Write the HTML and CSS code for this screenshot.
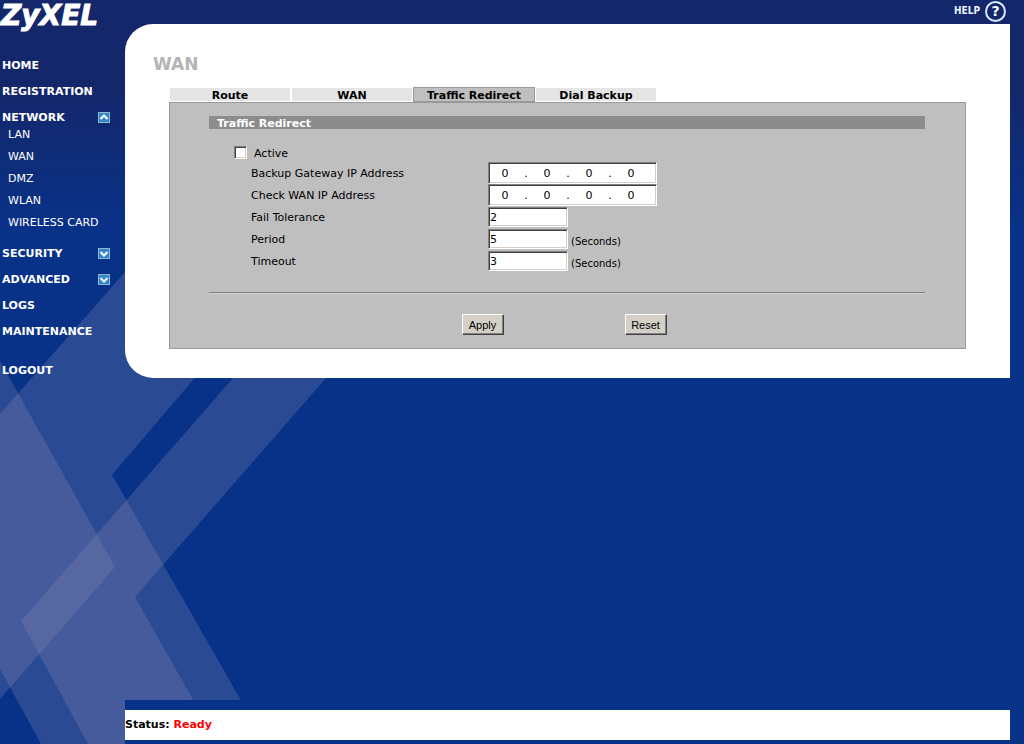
FILE: index.html
```html
<!DOCTYPE html>
<html lang="en">
<head>
    <meta charset="UTF-8">
    <meta name="viewport" content="width=device-width, initial-scale=1.0">
    <title>ZyXEL - WAN</title>
    <link rel="stylesheet" href="styles.css">
</head>
<body>

<svg class="backdrop" width="330" height="744" viewBox="0 0 330 744" aria-hidden="true">
    <g fill="#8988b3" fill-opacity="0.28">
        <path d="M125 272 L0 414 V669 L41 744 H266 L112 475 L285 272 Z"/>
        <path d="M0 361 L115 567 L0 699 Z"/>
        <path d="M233 378 L21 621 L88 744 H218 L135 597 L326 378 Z"/>
    </g>
</svg>

<div class="page">

    <div class="sidebar">
        <div class="logo">ZyXEL</div>
        <ul class="menu">
            <li><a href="#">HOME</a></li>
            <li><a href="#">REGISTRATION</a></li>
            <li>
                <a href="#">NETWORK</a>
                <svg class="arrow" width="12" height="11" viewBox="0 0 12 11">
                    <rect x="0.5" y="0.5" width="11" height="10" fill="#2f86c8" stroke="#8fb4cc"/>
                    <path d="M2.5 7 L6 3.5 L9.5 7" fill="none" stroke="#ffffff" stroke-width="2"/>
                </svg>
            </li>
        </ul>
        <ul class="submenu">
            <li><a href="#">LAN</a></li>
            <li><a href="#">WAN</a></li>
            <li><a href="#">DMZ</a></li>
            <li><a href="#">WLAN</a></li>
            <li><a href="#">WIRELESS CARD</a></li>
        </ul>
        <ul class="menu">
            <li>
                <a href="#">SECURITY</a>
                <svg class="arrow" width="12" height="11" viewBox="0 0 12 11">
                    <rect x="0.5" y="0.5" width="11" height="10" fill="#2f86c8" stroke="#8fb4cc"/>
                    <path d="M2.5 4 L6 7.5 L9.5 4" fill="none" stroke="#ffffff" stroke-width="2"/>
                </svg>
            </li>
            <li>
                <a href="#">ADVANCED</a>
                <svg class="arrow" width="12" height="11" viewBox="0 0 12 11">
                    <rect x="0.5" y="0.5" width="11" height="10" fill="#2f86c8" stroke="#8fb4cc"/>
                    <path d="M2.5 4 L6 7.5 L9.5 4" fill="none" stroke="#ffffff" stroke-width="2"/>
                </svg>
            </li>
            <li><a href="#">LOGS</a></li>
            <li><a href="#">MAINTENANCE</a></li>
            <li class="logout"><a href="#">LOGOUT</a></li>
        </ul>
    </div>

    <div class="main">
        <div class="topbar">
            <a class="help" href="#">
                <span>HELP</span>
                <span class="help-icon">?</span>
            </a>
        </div>

        <div class="panel">
            <h1>WAN</h1>

            <div class="tabs">
                <a href="#">Route</a>
                <a href="#">WAN</a>
                <a href="#" class="active">Traffic Redirect</a>
                <a href="#">Dial Backup</a>
            </div>

            <form class="box">
                <h2>Traffic Redirect</h2>

                <div class="check-row">
                    <input type="checkbox" id="active">
                    <label for="active">Active</label>
                </div>

                <div class="row">
                    <label for="gateway">Backup Gateway IP Address</label>
                    <div class="ip">
                        <input type="text" id="gateway" value="0"><span>.</span><input type="text" value="0" aria-label="Gateway part 2"><span>.</span><input type="text" value="0" aria-label="Gateway part 3"><span>.</span><input type="text" value="0" aria-label="Gateway part 4">
                    </div>
                </div>
                <div class="row">
                    <label for="wanip">Check WAN IP Address</label>
                    <div class="ip">
                        <input type="text" id="wanip" value="0"><span>.</span><input type="text" value="0" aria-label="WAN part 2"><span>.</span><input type="text" value="0" aria-label="WAN part 3"><span>.</span><input type="text" value="0" aria-label="WAN part 4">
                    </div>
                </div>
                <div class="row">
                    <label for="tolerance">Fail Tolerance</label>
                    <input class="text" type="text" id="tolerance" value="2">
                </div>
                <div class="row">
                    <label for="period">Period</label>
                    <input class="text" type="text" id="period" value="5">
                    <span class="unit">(Seconds)</span>
                </div>
                <div class="row">
                    <label for="timeout">Timeout</label>
                    <input class="text" type="text" id="timeout" value="3">
                    <span class="unit">(Seconds)</span>
                </div>

                <hr>

                <div class="buttons">
                    <button type="button">Apply</button>
                    <button type="reset">Reset</button>
                </div>
            </form>
        </div>

        <div class="footer">
            <div class="status">Status: <span>Ready</span></div>
        </div>
    </div>

</div>

</body>
</html>
```
FILE: styles.css
```css
* {
    box-sizing: border-box;
}

body {
    margin: 0;
    font-family: Verdana, "DejaVu Sans", sans-serif;
    font-size: 11px;
    line-height: 14px;
    color: #000;
    background: #083288 linear-gradient(#14276b, #14276b 90px, #083288 230px) no-repeat;
}

a {
    color: inherit;
    text-decoration: none;
}

ul {
    list-style: none;
    margin: 0;
    padding: 0;
}

/* crossing bands behind the page */
.backdrop {
    position: absolute;
    left: 0;
    top: 0;
}

.page {
    position: relative;
    display: flex;
    min-height: 100vh;
}

.sidebar {
    width: 125px;
    flex: none;
    color: #fff;
}

.logo {
    height: 52px;
    padding-left: 1px;
    font-size: 28px;
    line-height: 32px;
    font-weight: bold;
    font-style: italic;
    -webkit-text-stroke: 1px #fff;
}

.menu li {
    display: flex;
    align-items: center;
    justify-content: space-between;
    height: 26px;
    padding: 0 15px 0 2px;
    font-weight: bold;
}

.menu a {
    padding-top: 2px;
}

.menu .logout {
    margin-top: 13px;
}

.submenu {
    margin: -6px 0 6px;
    padding-left: 8px;
}

.submenu li {
    line-height: 22px;
    white-space: nowrap;
}

.main {
    flex: 1;
    display: flex;
    flex-direction: column;
}

.topbar {
    display: flex;
    justify-content: flex-end;
    height: 24px;
    padding-right: 18px;
}

.help {
    display: flex;
    align-items: center;
    gap: 5px;
    height: 22px;
    font-family: "DejaVu Sans Condensed", "DejaVu Sans", sans-serif;
    font-size: 10px;
    font-weight: bold;
    color: #e4f4ff;
}

.help-icon {
    width: 21px;
    height: 21px;
    border: 2px solid #d4ecff;
    border-radius: 50%;
    text-align: center;
    font-family: "DejaVu Sans", sans-serif;
    font-size: 14px;
    line-height: 17px;
    color: #fff;
    background: #14276b;
}

.panel {
    margin-right: 14px;
    padding: 29px 44px 29px;
    border-radius: 28px 0 0 28px;
    background: #fff;
}

h1 {
    margin: 0 0 12px -16px;
    font-size: 17px;
    line-height: 22px;
    color: #b4b4b4;
}

.tabs {
    display: flex;
}

.tabs a {
    width: 122px;
    height: 15px;
    border: 1px solid #fff;
    text-align: center;
    font-weight: bold;
    line-height: 15px;
    background: #e5e5e5;
}

.tabs .active {
    border-color: #999;
    background: #bfbfbf;
}

.box {
    padding: 13px 40px 13px 39px;
    border: 1px solid #999;
    background: #bfbfbf;
}

h2 {
    height: 13px;
    margin: 0 0 17px;
    padding-left: 8px;
    font-size: 11px;
    line-height: 15px;
    color: #fff;
    background: #8c8c8c;
}

.check-row {
    display: flex;
    gap: 7px;
    height: 16px;
    padding-left: 25px;
}

.check-row label {
    padding-top: 1px;
}

.check-row input,
.ip,
.text {
    border: 1px solid;
    border-color: #808080 #fff #fff #808080;
    box-shadow: inset 1px 1px #404040, inset -1px -1px #d4d0c8;
    background: #fff;
}

.check-row input {
    appearance: none;
    width: 13px;
    height: 13px;
    margin: 0;
}

.row {
    display: flex;
    align-items: center;
    height: 22px;
    padding-left: 42px;
}

.row label {
    width: 237px;
    padding-top: 2px;
}

.ip {
    display: flex;
    width: 169px;
    height: 22px;
    padding: 2px 1px 1px;
}

.ip input {
    width: 30px;
    padding: 0;
    border: 0;
    text-align: center;
    font: inherit;
    background: none;
}

.ip span {
    width: 12px;
    line-height: 18px;
    text-align: center;
}

.text {
    width: 80px;
    height: 20px;
    padding: 0 1px;
    font: inherit;
}

.unit {
    padding: 6px 0 0 3px;
    font-size: 10px;
}

hr {
    margin: 20px 0;
    border: 0;
    border-top: 1px solid #808080;
    border-bottom: 1px solid #d4d0c8;
}

.buttons {
    display: flex;
    justify-content: center;
    gap: 121px;
    padding-right: 6px;
}

button {
    width: 42px;
    height: 21px;
    padding: 0;
    border: 1px solid;
    border-color: #fff #404040 #404040 #fff;
    box-shadow: inset -1px -1px #808080;
    font-family: "Liberation Sans", Arial, sans-serif;
    font-size: 11px;
    background: #d4d0c8;
}

.footer {
    margin-top: auto;
    padding: 10px 14px 4px 0;
    background: #083288;
}

.status {
    line-height: 30px;
    font-weight: bold;
    background: #fff;
}

.status span {
    color: #f00;
}
```
